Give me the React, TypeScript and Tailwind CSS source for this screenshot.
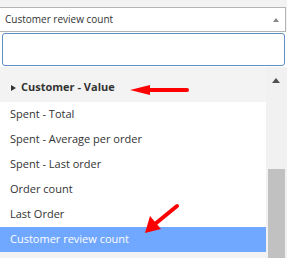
import React from 'react';

const items = [
  'Spent - Total',
  'Spent - Average per order',
  'Spent - Last order',
  'Order count',
  'Last Order',
  'Customer review count',
];

const App = () => {
  const selected = 'Customer review count';

  return (
    <div
      className="relative w-[287px] h-[258px] overflow-hidden bg-[#f3f3f3] text-[#333]"
      style={{ fontFamily: '"Open Sans", sans-serif' }}
    >
      {/* select box */}
      <div className="pt-[7px] pr-[1px]">
        <div className="flex items-center justify-between h-[25px] bg-white border-t border-b border-r border-[#b4b4b4] pl-[5px] pr-[6px] text-[10px]">
          <span>{selected}</span>
          <span className="w-0 h-0 border-l-[3px] border-r-[3px] border-b-[4px] border-l-transparent border-r-transparent border-b-[#888]" />
        </div>
      </div>

      {/* search */}
      <div className="bg-white px-[2px] pt-[1px] pb-[1px]">
        <input
          className="block w-full h-[33px] border border-[#5d8fc4] rounded-[3px] bg-white outline-none"
          type="text"
        />
      </div>

      {/* list + scrollbar */}
      <div className="flex">
        <div className="w-[266px] text-[11px]">
          <div className="flex items-center h-[35px] pt-[6px] pl-[11px] font-bold bg-[#f3f3f3]">
            <span className="w-0 h-0 mr-[5px] border-t-[3.5px] border-b-[3.5px] border-l-[5px] border-t-transparent border-b-transparent border-l-[#333]" />
            Customer - Value
          </div>
          {items.map((item) => (
            <div
              key={item}
              className={`flex items-center h-[25px] pl-[10px] ${
                item === selected ? 'bg-[#70a8ff] text-white' : 'bg-white'
              }`}
            >
              {item}
            </div>
          ))}
        </div>
        <div className="relative w-[21px] h-[191px] bg-[#f1f1f1]">
          <span className="absolute left-[6px] top-[11px] w-0 h-0 border-l-[4.5px] border-r-[4.5px] border-b-[5px] border-l-transparent border-r-transparent border-b-[#505050]" />
          <div className="absolute left-[2px] right-[2px] top-[102px] bottom-0 bg-[#c1c1c1]" />
        </div>
      </div>

      {/* annotation arrows */}
      <svg className="absolute inset-0 pointer-events-none" width="287" height="258">
        <line x1="187" y1="90" x2="146" y2="90" stroke="#ff0000" strokeWidth="4" strokeLinecap="round" />
        <polygon points="130,90 150,85 150,95" fill="#ff0000" />
        <line x1="177" y1="206" x2="155" y2="224" stroke="#ff0000" strokeWidth="4" strokeLinecap="round" />
        <polygon points="145,233 150,216 161,229" fill="#ff0000" />
      </svg>
    </div>
  );
};

export default App;
